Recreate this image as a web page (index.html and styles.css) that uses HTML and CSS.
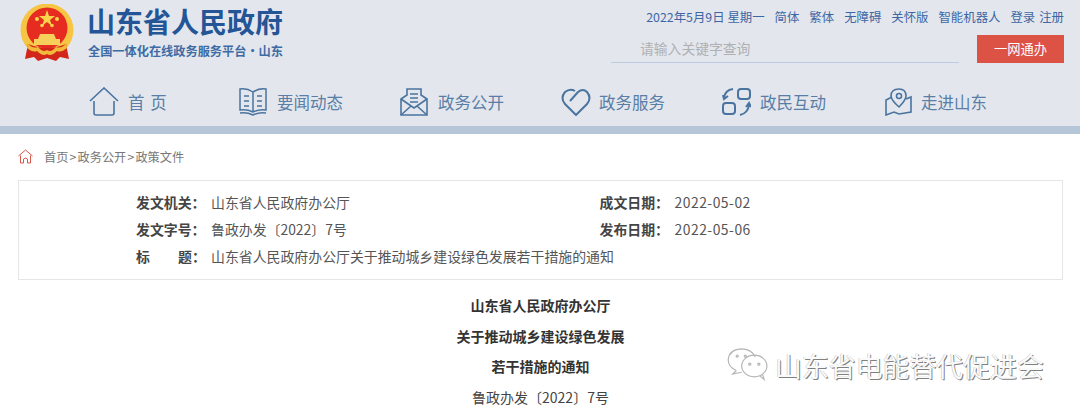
FILE: index.html
```html
<!DOCTYPE html>
<html lang="zh">
<head>
<meta charset="utf-8">
<title>山东省人民政府</title>
<link rel="stylesheet" href="styles.css">
</head>
<body>
<header class="header">
  <div class="top">
    <div class="brand">
      <svg class="emblem" width="54" height="58" viewBox="0 0 54 58">
        <circle cx="27" cy="26" r="26.5" fill="#f6c544"/>
        <circle cx="27" cy="24" r="20.5" fill="#e62c20"/>
        <path d="M27 6 L29 12 L35 12 L30 16 L32 22 L27 18 L22 22 L24 16 L19 12 L25 12Z" fill="#f8d44a"/>
        <circle cx="17" cy="15" r="2" fill="#f8d44a"/>
        <circle cx="37" cy="15" r="2" fill="#f8d44a"/>
        <circle cx="22" cy="21.500" r="1.800" fill="#f8d44a"/>
        <circle cx="32" cy="21.500" r="1.800" fill="#f8d44a"/>
        <path d="M18 35 L20 30 L34 30 L36 35 L40 35 L40 41 L14 41 L14 35Z" fill="#f6d05a"/>
        <path d="M8 40 L5 55 L14 53 L18 57 L27 54 L36 57 L40 53 L49 55 L46 40 Q27 48 8 40Z" fill="#d3261b"/>
        <path d="M8 40 Q13 45 18 43 Q23 49 27 46 Q31 49 36 43 Q41 45 46 40 L47 44 Q41 49 37 47 Q31 53 27 50 Q23 53 17 47 Q13 49 7 44Z" fill="#f2b93b"/>
      </svg>
      <div class="brand-text">
        <div class="site-name">山东省人民政府</div>
        <div class="site-sub">全国一体化在线政务服务平台·山东</div>
      </div>
    </div>
    <div class="tools">
      <div class="links">
        <span class="date">2022年5月9日 星期一</span>
        <a>简体</a><a>繁体</a><a>无障碍</a><a>关怀版</a><a>智能机器人</a>
        <span class="login"><a>登录</a><a>注册</a></span>
      </div>
      <div class="search">
        <div class="search-box">请输入关键字查询</div>
        <div class="search-btn">一网通办</div>
      </div>
    </div>
  </div>
  <nav class="nav">
    <a class="nav-item nav-home">
      <svg width="30" height="30" viewBox="0 0 30 30" fill="none" stroke="#4a74a0" stroke-width="1.6"><path d="M1 14 L15 1 L29 14"/><path d="M5 14 V26 Q5 28 7 28 H23 Q25 28 25 26 V14"/></svg>
      <span class="nav-spaced">首 页</span>
    </a>
    <a class="nav-item">
      <svg width="28" height="28" viewBox="0 0 28 28" fill="none" stroke="#4a74a0" stroke-width="1.5"><path d="M1 1 Q8 0 14 4 Q20 0 27 1 V22 Q20 21 14 24 Q8 21 1 22Z"/><path d="M14 4 V24M5 8 H10M5 13 H10M5 18 H10M18 8 H23M18 13 H23M18 18 H23M1 25 Q8 24 14 27 Q20 24 27 25"/></svg>
      <span>要闻动态</span>
    </a>
    <a class="nav-item">
      <svg width="28" height="28" viewBox="0 0 28 28" fill="none" stroke="#4a74a0" stroke-width="1.6"><path d="M1 11 L7 7 V1 H21 V7 L27 11 V27 H1Z"/><path d="M1 11 L14 20 L27 11M1 27 L11 18M27 27 L17 18M10 6 H18M10 10 H18M10 14 H18"/></svg>
      <span>政务公开</span>
    </a>
    <a class="nav-item nav-heart">
      <svg width="30" height="28" viewBox="0 0 30 28" fill="none" stroke="#4a74a0" stroke-width="2"><path d="M9 13 L17 4 Q22 0 26 4 Q31 10 26 16 L15 27 L4 16 Q-1 10 4 4 Q9 0 14 3"/></svg>
      <span>政务服务</span>
    </a>
    <a class="nav-item nav-swap">
      <svg width="29" height="28" viewBox="0 0 29 28" fill="none" stroke="#4a74a0" stroke-width="2"><rect x="16" y="1" width="12" height="10" rx="3"/><rect x="1" y="15" width="12" height="11" rx="3"/><path d="M11 1 Q3 2 2 10M1 7 L2 11 L6 8M18 27 Q26 25 27 17M24 19 L27 15 L29 19"/></svg>
      <span>政民互动</span>
    </a>
    <a class="nav-item nav-map">
      <svg width="27" height="28" viewBox="0 0 27 28" fill="none" stroke="#4a74a0" stroke-width="1.6"><path d="M7 9 L1 12 V27 L9 24 L14 26 L26 24 V9 L21 11"/><path d="M14 19 Q6 12 6 8 Q6 1 14 1 Q21 1 21 8 Q21 12 14 19Z"/><circle cx="14" cy="8" r="2.5"/></svg>
      <span>走进山东</span>
    </a>
  </nav>
</header>
<div class="band"></div>
<main class="main">
  <div class="crumbs">
    <svg width="15" height="15" viewBox="0 0 15 15" fill="none" stroke="#d9574a" stroke-width="1"><path d="M0.5 7 L7.5 1 L14.5 7M2.500 6.500 V14 H5.500 V10 Q7.500 8 9.500 10 V14 H12.500 V6.500"/></svg>
    <span>首页</span><span class="sep">&gt;</span><span>政务公开</span><span class="sep">&gt;</span><span>政策文件</span>
  </div>
  <section class="info">
    <div class="info-row">
      <div class="cell"><span class="label">发文机关：</span><span>山东省人民政府办公厅</span></div>
      <div class="cell"><span class="label">成文日期：</span><span class="num">2022-05-02</span></div>
    </div>
    <div class="info-row">
      <div class="cell"><span class="label">发文字号：</span><span>鲁政办发〔2022〕7号</span></div>
      <div class="cell"><span class="label">发布日期：</span><span class="num">2022-05-06</span></div>
    </div>
    <div class="info-row">
      <div class="cell"><span class="label label-split"><span>标</span><span>题：</span></span><span>山东省人民政府办公厅关于推动城乡建设绿色发展若干措施的通知</span></div>
    </div>
  </section>
  <article class="article">
    <p class="strong">山东省人民政府办公厅</p>
    <p class="strong">关于推动城乡建设绿色发展</p>
    <p class="strong">若干措施的通知</p>
    <p>鲁政办发〔2022〕7号</p>
  </article>
</main>
<div class="mark">
  <svg width="42" height="36" viewBox="0 0 46 40" fill="none" stroke="#b5b5b5" stroke-width="1.3"><path d="M10 25 Q1 21 1 13 Q2 2 15 1 Q27 1 31 10"/><path d="M10 25 L6 29 L16 27"/><ellipse cx="30" cy="20" rx="14" ry="12"/><path d="M36 31 L41 35 L39 29"/><circle cx="11" cy="9" r="1.2"/><circle cx="20" cy="9" r="1.2"/><circle cx="25" cy="18" r="1.2"/><circle cx="35" cy="18" r="1.2"/></svg>
  <span class="mark-text">山东省电能替代促进会</span>
</div>
</body>
</html>
```
FILE: styles.css
```css
* { box-sizing: border-box; }
html, body { margin: 0; padding: 0; }
body {
  width: 1080px;
  height: 414px;
  overflow: hidden;
  position: relative;
  background: #fff;
  color: #555;
  font-family: "Noto Sans CJK SC", "Liberation Sans", sans-serif;
}
.header { height: 126px; background: #e3e7ed; }
.band { height: 8px; background: #b5c6d8; }
.top { height: 76px; display: flex; justify-content: space-between; }
.brand { display: flex; padding: 3px 0 0 20px; }
.emblem { margin-top: 1px; }
.brand-text { margin-left: 13px; width: 200px; }
.site-name { font-size: 28px; line-height: 36px; font-weight: 700; color: #245596; white-space: nowrap; }
.site-sub { font-size: 12.2px; line-height: 18px; margin: 3px 0 0 1px; font-weight: 700; color: #3f6ba5; white-space: nowrap; }
.tools { width: 453px; margin-right: 16px; padding-top: 8px; }
.links { display: flex; justify-content: flex-end; font-size: 12.4px; line-height: 18px; color: #3d66a4; white-space: nowrap; }
.links a { margin-left: 10px; }
.login a { margin-left: 4px; }
.login a:first-child { margin-left: 10px; }
.search { display: flex; justify-content: space-between; margin-top: 9px; }
.search-box { width: 348px; height: 26px; margin-top: 2px; padding-left: 29px; border-bottom: 1px solid #bccbdd; font-size: 13.8px; line-height: 22px; color: #aeb0b3; }
.search-btn { width: 87px; height: 28px; background: #dc5245; color: #fff; font-size: 13.3px; line-height: 28px; text-align: center; }
.nav { display: flex; height: 50px; padding: 11px 0 0 89px; }
.nav-item { display: flex; align-items: center; height: 30px; width: 161px; color: #5a7ea6; font-size: 16.5px; white-space: nowrap; }
.nav-item svg { flex: none; margin-right: 10px; }
.nav-item.nav-home { width: 150px; }
.nav-item.nav-home svg { margin-right: 9px; }
.nav-item.nav-heart svg { margin-right: 8px; }
.nav-item.nav-swap svg { margin-right: 9px; }
.nav-item.nav-map svg { margin: 0 9px 0 2px; }
.nav-spaced { word-spacing: 2px; }
.main { padding: 0 17px 0 18px; }
.crumbs { display: flex; align-items: center; height: 45px; margin-bottom: 1px; font-size: 12.2px; color: #777; }
.crumbs svg { margin-right: 11px; }
.sep { margin: 0 1.2px; }
.info { height: 100px; border: 1px solid #e6e6e6; padding: 8px 0 0 117px; font-size: 13.9px; color: #555; }
.info-row { display: flex; height: 27px; line-height: 27px; }
.cell { display: flex; width: 465px; white-space: nowrap; }
.cell + .cell { margin-left: 1px; }
.label { width: 75px; flex: none; font-weight: 700; color: #444; }
.label-split { display: flex; justify-content: space-between; }
.label-split span:last-child { width: 33px; }
.num { letter-spacing: 0.5px; }
.article { text-align: center; font-size: 14px; line-height: 30.7px; color: #444; padding-top: 10px; }
.article p { margin: 0; }
.strong { font-weight: 700; color: #333; }
.mark { position: absolute; left: 727px; top: 348px; display: flex; align-items: center; }
.mark svg { flex: none; margin-right: 6px; }
.mark-text { font-size: 26.9px; line-height: 36px; color: #fafafa; text-shadow: 1px 1px 0 #808080, -0.5px -0.5px 0 #c0c0c0; white-space: nowrap; }
```
